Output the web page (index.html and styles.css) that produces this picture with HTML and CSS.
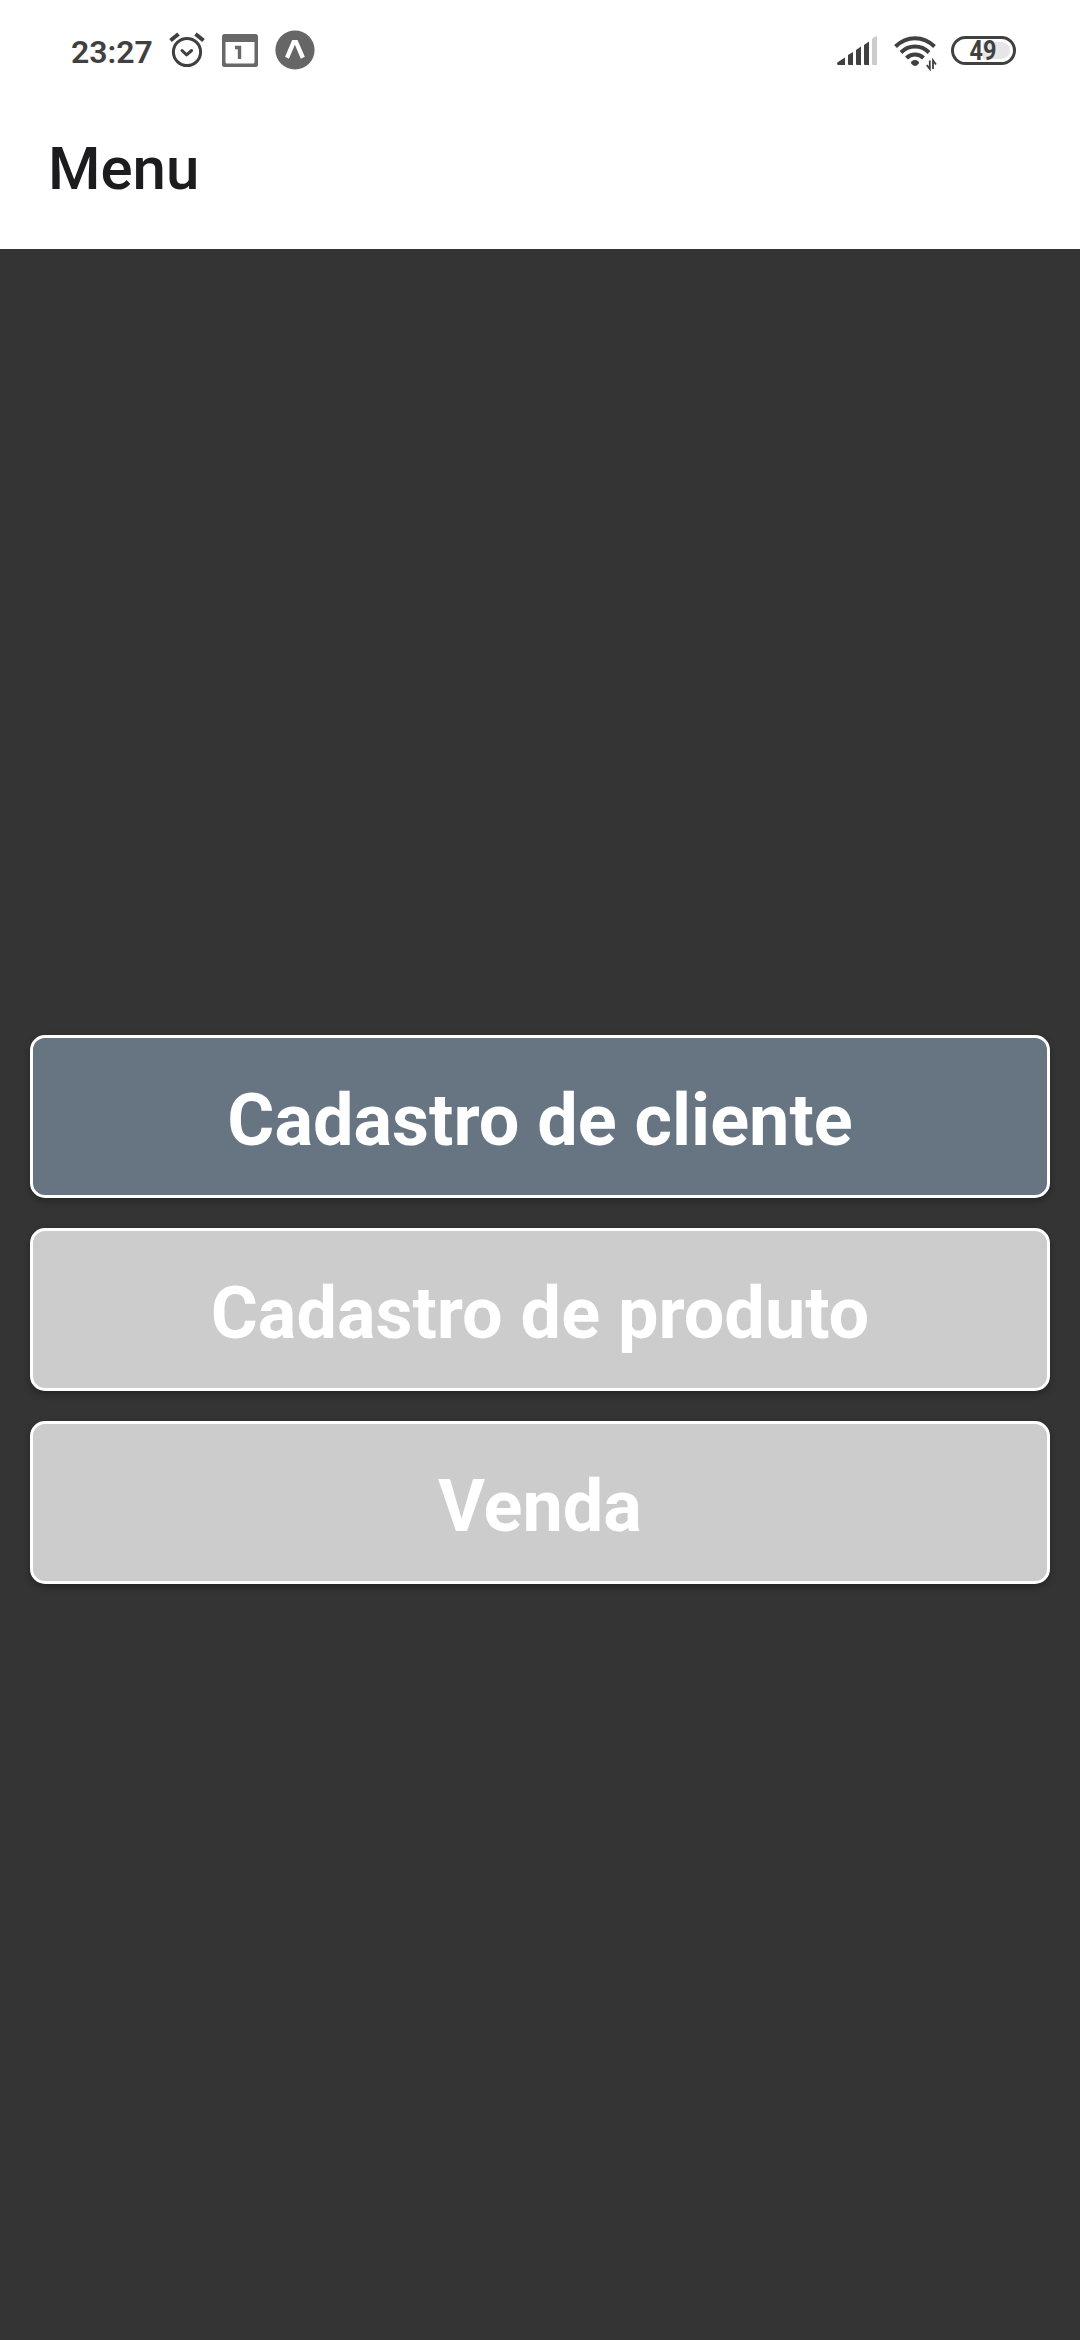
FILE: index.html
```html
<!DOCTYPE html>
<html lang="pt-BR">
<head>
<meta charset="utf-8">
<title>Menu</title>
<link rel="stylesheet" href="styles.css">
</head>
<body>
<div class="status-bar">
  <div class="status-left">
    <span class="clock">23:27</span>
    <svg class="alarm" width="36" height="36" viewBox="0 0 36 36" fill="none" stroke="#404040" stroke-linecap="round" stroke-linejoin="round">
      <circle cx="18" cy="20" r="13.6" stroke-width="3"/>
      <path d="M13 18.5l4.6 4.4 5-4.4" stroke-width="3"/>
      <path d="M1.500 8.500L9.500 2M34.500 8.500L26.500 2" stroke-width="4" stroke-linecap="butt"/>
    </svg>
    <svg class="calendar" width="36" height="33" viewBox="0 0 36 33">
      <path fill="#686868" fill-rule="evenodd" d="M2.5 0h31Q36 0 36 2.500V30.500Q36 33 33.500 33h-31Q0 33 0 30.500V2.500Q0 0 2.500 0zM3.500 8v20Q3.500 29.500 5 29.500h26Q32.500 29.500 32.500 28V8z"/>
      <path fill="none" stroke="#686868" stroke-width="3.400" d="M13 13.500h4.500V25"/>
    </svg>
    <svg class="expo" width="40" height="40" viewBox="0 0 40 40">
      <circle cx="20" cy="20" r="19.600" fill="#666"/>
      <path fill="#fff" d="M17.200 10h5.300l7.300 16.800-4 2-5.900-14.100-6 14.100-3.800-2z"/>
    </svg>
  </div>
  <div class="status-right">
    <svg class="signal" width="41" height="30" viewBox="0 0 41 30">
      <g fill="#404040">
        <path d="M0 27.500Q0 26.500 1 26L8 21.500V29H1.500Q0 29 0 27.500z"/>
        <path d="M11 19l5-3v13h-4q-1 0-1-1z"/>
        <path d="M19 14l5-3.500V29h-4q-1 0-1-1z"/>
        <path d="M27 9l5-3.500V29h-4q-1 0-1-1z"/>
      </g>
      <path fill="#ccc" d="M35 3.500Q35 2.500 36 2l3-1.700Q40 0 40 1v28h-4q-1 0-1-1z"/>
    </svg>
    <svg class="wifi" width="43" height="35" viewBox="0 0 43 35" fill="none" stroke="#404040" stroke-width="4">
      <path d="M1.500 10.500Q10 2.200 21 2.200t19.500 8.300"/>
      <path d="M7 16.500Q13 10.600 21 10.600t14 5.900"/>
      <path d="M12.500 22Q16 18.500 21 18.500t8.500 3.500"/>
      <path fill="#404040" stroke="none" d="M21 24c2.500 0 4 1.500 4 2.800S22.600 30 21 30s-4-1.900-4-3.200 1.500-2.800 4-2.800z"/>
      <path stroke-width="1.800" d="M35.800 24.500v8.500l-3-4M39 33v-8.500l3 4"/>
    </svg>
    <div class="battery"><span class="battery-level">49</span></div>
  </div>
</div>
<header class="app-header"><h1 class="title">Menu</h1></header>
<main class="menu">
  <button class="menu-button menu-button-active">Cadastro de cliente</button>
  <button class="menu-button">Cadastro de produto</button>
  <button class="menu-button">Venda</button>
</main>
</body>
</html>
```
FILE: styles.css
```css
* { box-sizing: border-box; }
body {
  margin: 0;
  height: 2340px;
  display: flex;
  flex-direction: column;
  overflow: hidden;
  background: #343434;
  font-family: Roboto, sans-serif;
}
svg { display: block; flex: none; }
.status-bar {
  height: 88px;
  padding: 0 64px 0 71px;
  display: flex;
  align-items: flex-start;
  justify-content: space-between;
  background: #fff;
  color: #404040;
}
.status-left, .status-right { display: flex; align-items: flex-start; }
.clock { width: 98px; padding-top: 33px; font-size: 32px; line-height: 38px; font-weight: 600; }
.alarm { margin-top: 32px; }
.calendar { margin: 34px 0 0 17px; }
.expo { margin: 30px 0 0 17px; }
.signal { margin-top: 36px; }
.wifi { margin: 36px 0 0 16px; }
.battery {
  width: 65px;
  height: 29px;
  margin: 36px 0 0 14px;
  border: 3px solid #404040;
  border-radius: 15px;
  display: flex;
  justify-content: center;
  align-items: center;
  background: linear-gradient(90deg, #fff 50%, #e6e6e6 50%) padding-box;
  box-shadow: inset 0 0 0 3px #fff;
}
.battery-level { font-size: 28px; line-height: 28px; font-weight: 700; transform: scaleX(.84); }
.app-header {
  height: 161px;
  padding: 0 48px;
  display: flex;
  align-items: center;
  background: #fff;
}
.title { margin: 0; color: #1c1c1e; font-size: 60px; line-height: 70px; font-weight: 500; }
.menu {
  flex: 1;
  padding: 30px 30px 0;
  display: flex;
  flex-direction: column;
  justify-content: center;
  gap: 30px;
}
.menu-button {
  height: 163px;
  padding: 8px 0 0;
  border: 3px solid #fff;
  border-radius: 15px;
  background: #ccc;
  color: #fff;
  font: 700 72px/84px Roboto, sans-serif;
  box-shadow: 0 3px 7px rgba(0, 0, 0, .3);
}
.menu-button-active { background: #677482; }
```
